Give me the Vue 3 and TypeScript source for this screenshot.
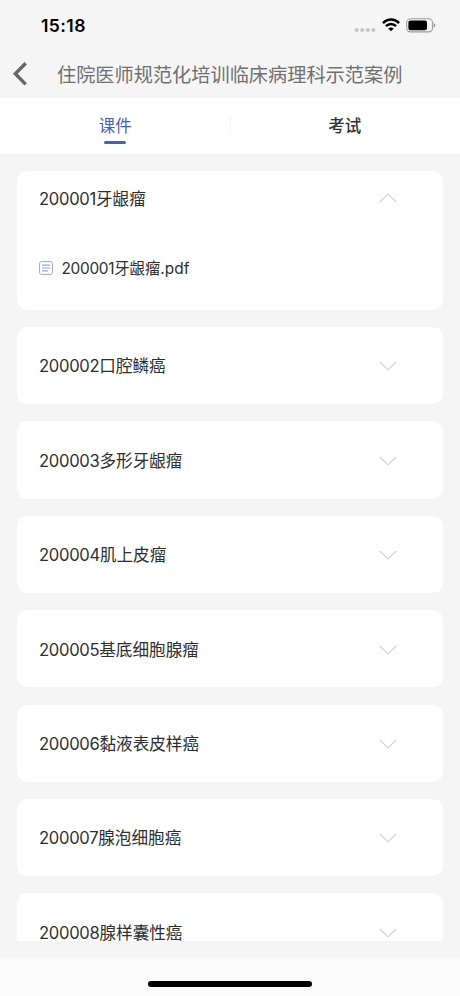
<script setup lang="ts">
import { ref } from 'vue'

interface CaseItem {
  code: string
  name: string
  files: string[]
}

const tabs = ['课件', '考试']
const activeTab = ref(0)
const opened = ref('200001')

const cases: CaseItem[] = [
  { code: '200001', name: '牙龈瘤', files: ['.pdf'] },
  { code: '200002', name: '口腔鳞癌', files: [] },
  { code: '200003', name: '多形牙龈瘤', files: [] },
  { code: '200004', name: '肌上皮瘤', files: [] },
  { code: '200005', name: '基底细胞腺瘤', files: [] },
  { code: '200006', name: '黏液表皮样癌', files: [] },
  { code: '200007', name: '腺泡细胞癌', files: [] },
  { code: '200008', name: '腺样囊性癌', files: [] },
]

function toggle(code: string) {
  opened.value = opened.value === code ? '' : code
}
</script>

<template>
  <div class="screen">
    <header class="status">
      <span class="time">15:18</span>
      <div class="indicators">
        <svg class="signal" width="22" height="6" viewBox="0 0 22 6">
          <circle v-for="i in 4" :key="i" :cx="i * 5.6 - 3" cy="3" r="2.1" fill="#c6c6c6" />
        </svg>
        <svg class="wifi" width="18" height="14" viewBox="0 0 18 14">
          <g fill="none" stroke="#000" stroke-width="2.5">
            <path d="M.9 5.1Q4.4 1.6 9 1.6T17.1 5.1" />
            <path d="M3.9 8.2Q6.2 6 9 6T14.1 8.2" />
          </g>
          <path d="M6.2 10.4Q9 8.5 11.8 10.4L9 13.3Z" />
        </svg>
        <svg class="battery" width="30" height="15" viewBox="0 0 30 15">
          <rect x=".7" y=".7" width="25.8" height="13.2" rx="3.8" fill="none" stroke="#9c9c9c" stroke-width="1.1" />
          <rect x="2.4" y="2.4" width="18.6" height="9.8" rx="2" />
          <path d="M27.7 5Q29.4 5.5 29.4 7.3T27.7 9.6Z" fill="#9c9c9c" />
        </svg>
      </div>
    </header>

    <nav class="navbar">
      <svg class="back" width="16" height="26" viewBox="0 0 16 26">
        <path d="M13.7 2.2L3.3 12.8L13.7 23.4" fill="none" stroke="#666" stroke-width="3.4" />
      </svg>
      <h1>住院医师规范化培训临床病理科示范案例</h1>
    </nav>

    <div class="tabs">
      <button
        v-for="(tab, i) in tabs"
        :key="tab"
        :class="['tab', { active: activeTab === i }]"
        @click="activeTab = i"
      >
        {{ tab }}
      </button>
    </div>

    <main class="list">
      <section v-for="item in cases" :key="item.code" :class="['card', { open: opened === item.code }]">
        <div class="head" @click="toggle(item.code)">
          <span class="label"><span class="num">{{ item.code }}</span>{{ item.name }}</span>
          <svg class="chevron" width="18" height="10" viewBox="0 0 18 10">
            <path d="M.8 1L9 8.8L17.2 1" fill="none" stroke="#cfcfcf" stroke-width="1.1" />
          </svg>
        </div>
        <div v-if="opened === item.code" class="files">
          <div v-for="ext in item.files" :key="ext" class="file">
            <svg width="14" height="14" viewBox="0 0 14 14" fill="none" stroke="#96a5d6">
              <rect x=".6" y=".6" width="12.8" height="12.8" rx="1.8" />
              <path d="M3 4.1H11M3 7H11M3 9.9H9" stroke-width="1.1" />
            </svg>
            <span class="label"><span class="num">{{ item.code }}</span>{{ item.name }}{{ ext }}</span>
          </div>
        </div>
      </section>
    </main>

    <footer class="home"><span class="bar"></span></footer>
  </div>
</template>

<style>
body {
  background: #f5f5f5;
}
</style>

<style scoped>
.screen {
  display: flex;
  flex-direction: column;
  width: 460px;
  height: 996px;
  overflow: hidden;
  background: #f5f5f5;
  color: #2e2e2e;
  font-family: Inter, "Noto Sans CJK SC", sans-serif;
}
.status {
  display: flex;
  justify-content: space-between;
  box-sizing: border-box;
  height: 50px;
  flex: none;
  padding: 15px 24px 0 41px;
}
.time {
  color: #000;
  font-size: 17.6px;
  font-weight: 600;
  letter-spacing: 0.4px;
  line-height: 22px;
}
.indicators {
  display: flex;
  align-items: flex-start;
}
.signal {
  margin-top: 12px;
}
.wifi {
  margin: 3px 6px 0 6px;
}
.battery {
  margin-top: 3px;
}
.navbar {
  display: flex;
  align-items: center;
  flex: none;
  height: 48px;
  padding-left: 12px;
}
h1 {
  margin: 1px 0 0 29px;
  color: #707070;
  font-size: 19.2px;
  font-weight: 400;
  line-height: 28px;
  white-space: nowrap;
}
.tabs {
  display: flex;
  flex: none;
  height: 56px;
  background: #fff;
}
.tab {
  display: flex;
  flex: 1;
  flex-direction: column;
  align-items: center;
  padding: 16px 0 0;
  border: 0;
  background: none;
  color: #333;
  font: 500 16.5px/25px Inter, "Noto Sans CJK SC", sans-serif;
}
.tab + .tab {
  margin-left: -1px;
  background: linear-gradient(#f4f4f4, #f4f4f4) 0 19px / 1px 16px no-repeat;
}
.tab.active {
  color: #4860b5;
  font-weight: 400;
}
.tab.active::after {
  content: "";
  width: 22px;
  height: 3px;
  margin-top: 2px;
  border-radius: 1.5px;
  background: #4860b5;
}
.list {
  display: flex;
  flex-direction: column;
  gap: 17.2px;
  box-sizing: border-box;
  height: 787px;
  flex: none;
  padding: 16.6px 17px 0;
  overflow: hidden;
}
.card {
  flex: none;
  border-radius: 10px;
  background: #fff;
}
.head {
  display: flex;
  align-items: center;
  justify-content: space-between;
  box-sizing: border-box;
  height: 77.2px;
  padding: 1.6px 46px 0 22px;
}
.open .head {
  height: 56px;
  padding-top: 0;
}
.label {
  font-size: 16.6px;
  line-height: 16px;
  white-space: nowrap;
}
.num {
  letter-spacing: -0.3px;
}
.open .chevron {
  margin-top: -2px;
  transform: rotate(180deg);
}
.files {
  height: 83.3px;
}
.file {
  display: flex;
  align-items: center;
  gap: 8.5px;
  height: 84px;
  padding-left: 22px;
}
.file svg {
  margin-top: -2px;
}
.file .label {
  margin-top: 1px;
  font-size: 15.4px;
}
.home {
  display: flex;
  justify-content: center;
  align-items: flex-start;
  flex: none;
  height: 38px;
  margin-top: 17px;
  background: #fafafa;
}
.bar {
  width: 164px;
  height: 6px;
  margin-top: 23px;
  border-radius: 3px;
  background: #000;
}
</style>
